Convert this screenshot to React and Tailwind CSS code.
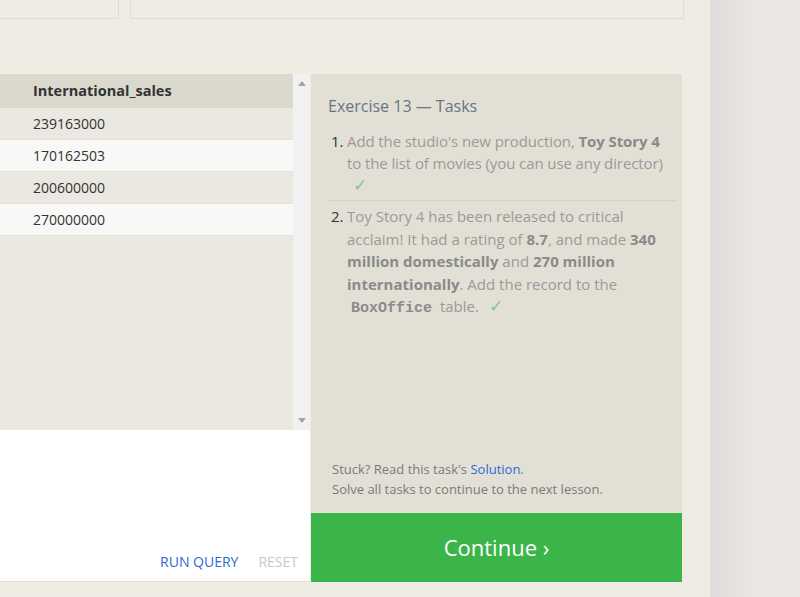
import React from 'react';

const rows = ['239163000', '170162503', '200600000', '270000000'];

const Check = ({ className = '' }) => <span className={`text-[17px] leading-[22px] text-[#7ccb86] ${className}`}>✓</span>;

const App = () => {
    return (
        <div className="flex h-[597px] w-[800px] overflow-hidden bg-[#efece4] font-['Open_Sans',sans-serif]">
            <div className="flex w-[710px] flex-col">
                <div className="flex h-[19px] gap-[11px]">
                    <div className="w-[119px] border-r border-b border-[#dfdcd3]" />
                    <div className="w-[554px] border-x border-b border-[#dfdcd3]" />
                </div>

                <div className="mt-[55px] flex">
                    <div className="flex w-[310px] flex-col">
                        <div className="flex h-[356px]">
                            <div className="flex w-[293px] flex-col bg-[#eae8e1]">
                                <div className="flex h-[34px] items-center bg-[#dbd9ce] pl-[33px] text-[14.5px] font-bold text-[#333]">
                                    International_sales
                                </div>
                                {rows.map((r, i) => (
                                    <div
                                        key={r}
                                        className={`flex h-[32px] items-center border-b border-[#e2e0d8] pl-[33px] text-[14px] text-[#333] ${i % 2 ? 'bg-[#f8f8f7]' : 'bg-[#eae8e1]'}`}
                                    >
                                        {r}
                                    </div>
                                ))}
                            </div>
                            <div className="flex w-[17px] flex-col items-center justify-between bg-[#f1f1f1] py-[7px]">
                                <svg width="8" height="5" viewBox="0 0 8 5"><path d="M0 5 L4 0 L8 5 Z" fill="#a3a3a3" /></svg>
                                <svg width="8" height="5" viewBox="0 0 8 5"><path d="M0 0 L4 5 L8 0 Z" fill="#a3a3a3" /></svg>
                            </div>
                        </div>
                        <div className="flex h-[152px] items-end justify-end gap-[20px] border-b border-[#e0ddd5] bg-white pr-[12px] pb-[9px] text-[14px]">
                            <span className="text-[#2a6ad4]">RUN QUERY</span>
                            <span className="text-[#c8c8c8]">RESET</span>
                        </div>
                    </div>

                    <div className="ml-px flex w-[371px] flex-col">
                        <div className="flex h-[439px] flex-col bg-[#e2e0d5] pl-[17px] pr-[6px] pt-[20px]">
                            <div className="text-[16px] text-[#6b7384]">Exercise 13 — Tasks</div>
                            <ol className="mt-[12px] text-[15px] leading-[22px] text-[#9a9a9a]">
                                <li className="flex border-b border-[#d4d2c8] pb-[4px]">
                                    <span className="w-[19px] shrink-0 pl-[3px] text-[#333]">1.</span>
                                    <span className="tracking-[-0.1px]">
                                        Add the studio's new production, <b className="text-[#8a8a8a]">Toy Story 4</b> to the list of movies (you can use any director)
                                        <br />
                                        <Check className="ml-[6px]" />
                                    </span>
                                </li>
                                <li className="flex pt-[4px] leading-[22.5px]">
                                    <span className="w-[19px] shrink-0 pl-[3px] text-[#333]">2.</span>
                                    <span className="pr-[10px]">
                                        Toy Story 4 has been released to critical acclaim! It had a rating of <b className="text-[#8a8a8a]">8.7</b>, and made{' '}
                                        <b className="text-[#8a8a8a]">340 million domestically</b> and <b className="text-[#8a8a8a]">270 million internationally</b>. Add the record to the{' '}
                                        <code className="px-1 font-['Liberation_Mono',monospace] font-bold text-[#8a8a8a]">BoxOffice</code> table.
                                        <Check className="ml-[10px]" />
                                    </span>
                                </li>
                            </ol>
                            <div className="mt-auto pb-[14px] text-[13px] leading-[20px] text-[#7a7a7a]">
                                <div className="pl-[4px]">
                                    Stuck? Read this task's <span className="text-[#2a6ad4]">Solution</span>.
                                </div>
                                <div className="pl-[4px]">Solve all tasks to continue to the next lesson.</div>
                            </div>
                        </div>
                        <div className="flex h-[69px] items-center justify-center bg-[#3bb54a] text-[22px] text-white">
                            Continue ›
                        </div>
                    </div>
                </div>
            </div>
            <div className="flex-1 bg-gradient-to-r from-[#e0dcd9] via-[#ebe7e4] to-[#ebe7e4]" />
        </div>
    );
};

export default App;
